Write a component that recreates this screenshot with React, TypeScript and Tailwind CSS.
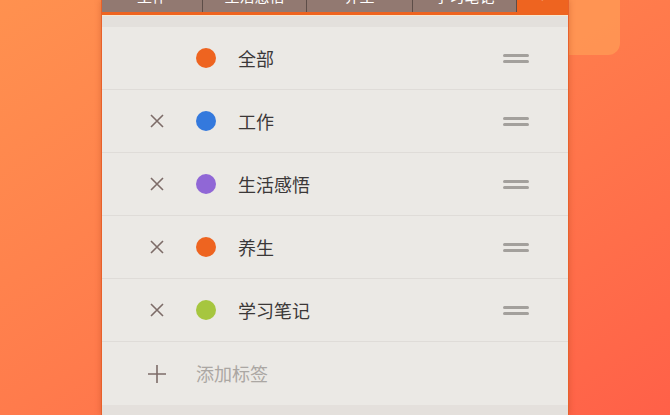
import React from "react";

const tabs = [
  { label: "工作", w: "w-[101px]" },
  { label: "生活感悟", w: "w-[104px]" },
  { label: "养生", w: "w-[106px]" },
  { label: "学习笔记", w: "w-[104px]" },
];

const tags = [
  { name: "全部", color: "bg-[#ee6420]", removable: false },
  { name: "工作", color: "bg-[#3479dd]", removable: true },
  { name: "生活感悟", color: "bg-[#9067d6]", removable: true },
  { name: "养生", color: "bg-[#ee6420]", removable: true },
  { name: "学习笔记", color: "bg-[#a6c63f]", removable: true },
];

function Cross() {
  return (
    <svg width="16" height="16" viewBox="0 0 16 16" className="text-[#7d6c68]">
      <path d="M2 2 L14 14 M14 2 L2 14" stroke="currentColor" strokeWidth="1.6" />
    </svg>
  );
}

function Plus() {
  return (
    <svg width="20" height="20" viewBox="0 0 20 20" className="text-[#7d6c68]">
      <path d="M10 1 V19 M1 10 H19" stroke="currentColor" strokeWidth="1.6" />
    </svg>
  );
}

function Handle() {
  return (
    <div className="flex w-[26px] flex-col gap-[3px]">
      <div className="h-[3px] rounded-sm bg-[#a3a09c]" />
      <div className="h-[3px] rounded-sm bg-[#a3a09c]" />
    </div>
  );
}

export default function App() {
  return (
    <div
      className="relative h-[415px] w-[670px] overflow-hidden bg-gradient-to-br from-[#ff914f] via-[#ff7b4c] to-[#ff6048]"
      style={{ fontFamily: '"Noto Sans CJK SC", "Noto Sans", sans-serif' }}
    >
      {/* card behind the panel */}
      <div className="absolute left-[420px] top-[-20px] h-[75px] w-[200px] rounded-br-[12px] bg-[#ff9a55]/80" />

      <div className="relative ml-[101px] flex h-full w-[468px] flex-col border-x border-[#e8612a] bg-[#ebe9e5] shadow-[0_0_6px_rgba(160,60,20,0.35)]">
        {/* clipped tab bar */}
        <div className="flex h-[12px] overflow-hidden bg-[#927971]">
          {tabs.map((t) => (
            <div
              key={t.label}
              className={`${t.w} flex h-full justify-center border-r border-[#5d4d48] text-[15px] leading-none text-white`}
            >
              <span className="-mt-[12px]">{t.label}</span>
            </div>
          ))}
          <div className="flex flex-1 justify-center bg-[#ee6420] text-[15px] leading-none text-white">
            <span className="-mt-[12px]">+</span>
          </div>
        </div>
        <div className="h-[3px] bg-[#ee6420]" />
        <div className="h-[1px] bg-[#f6e7cf]" />
        <div className="h-[11px] bg-[#e3e0dc]" />

        {tags.map((t) => (
          <div key={t.name} className="flex h-[63px] shrink-0 items-center border-b border-[#dfdcd8] first:h-[64px]">
            <div className="flex w-[94px] justify-end pr-[31px]">{t.removable && <Cross />}</div>
            <div className={`h-[20px] w-[20px] rounded-full ${t.color}`} />
            <div className="ml-[22px] flex-1 text-[18px] text-[#3b3838]">{t.name}</div>
            <div className="mr-[39px]">
              <Handle />
            </div>
          </div>
        ))}

        <div className="flex h-[63px] shrink-0 items-center">
          <div className="flex w-[94px] justify-end pr-[29px]">
            <Plus />
          </div>
          <div className="ml-[0px] text-[18px] text-[#aba7a3]">添加标签</div>
        </div>
        <div className="flex-1 bg-[#e4e0dc]" />
      </div>
    </div>
  );
}
